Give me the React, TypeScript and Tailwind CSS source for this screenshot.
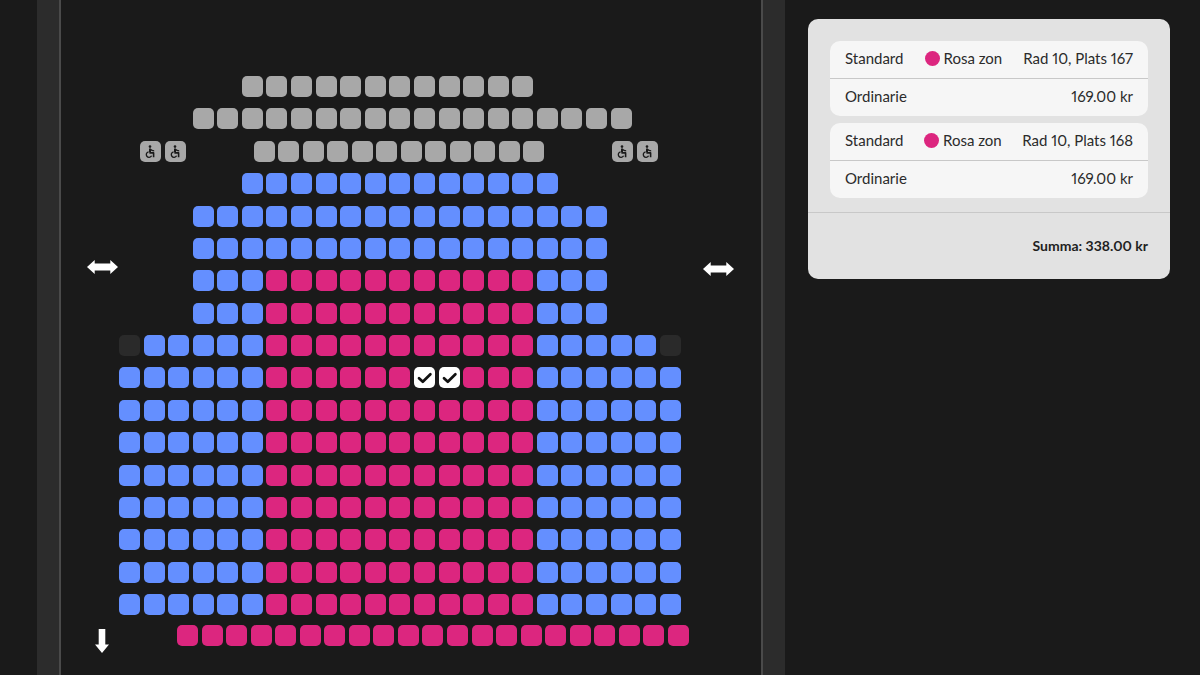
import { useState } from 'react';

type SeatKind = 'b' | 'p' | 'g' | 'x' | 'w';

// b = blue zone, p = pink zone, g = taken, x = blocked, w = wheelchair, . = empty space
const rows = [
  '.....gggggggggggg......',
  '...gggggggggggggggggg..',
  'ww|gggggggggggg|ww',
  '.....bbbbbbbbbbbbb.....',
  '...bbbbbbbbbbbbbbbbb...',
  '...bbbbbbbbbbbbbbbbb...',
  '...bbbpppppppppppbbb...',
  '...bbbpppppppppppbbb...',
  'xbbbbbpppppppppppbbbbbx',
  'bbbbbbpppppppppppbbbbbb',
  'bbbbbbpppppppppppbbbbbb',
  'bbbbbbpppppppppppbbbbbb',
  'bbbbbbpppppppppppbbbbbb',
  'bbbbbbpppppppppppbbbbbb',
  'bbbbbbpppppppppppbbbbbb',
  'bbbbbbpppppppppppbbbbbb',
  'bbbbbbpppppppppppbbbbbb',
];
const lastRow = 'ppppppppppppppppppppp';

const seatColors: Record<SeatKind, string> = {
  b: 'bg-[#648fff]',
  p: 'bg-[#dc267f]',
  g: 'bg-[#a8a8a8]',
  w: 'bg-[#a8a8a8]',
  x: 'bg-[#2a2a2a]',
};

const tickets = [
  { id: 167, type: 'Standard', zone: 'Rosa zon', place: 'Rad 10, Plats 167', price: '169.00 kr' },
  { id: 168, type: 'Standard', zone: 'Rosa zon', place: 'Rad 10, Plats 168', price: '169.00 kr' },
];

function CheckIcon() {
  return (
    <svg viewBox="0 0 21 21" className="size-full" aria-hidden="true">
      <path
        d="M5 11.2 8.8 14.8 16.4 7.2"
        fill="none"
        stroke="#111"
        strokeWidth="2.7"
        strokeLinecap="round"
        strokeLinejoin="round"
      />
    </svg>
  );
}

function WheelchairIcon() {
  return (
    <svg viewBox="0 0 21 21" className="size-full" fill="none" stroke="#1a1a1a" aria-hidden="true">
      <circle cx="10" cy="5.6" r="1.3" fill="#1a1a1a" stroke="none" />
      <path d="M10 7.4v3.8" strokeWidth="2" />
      <path d="M10.3 8.2c.9 1.1 2.2 1.7 3.9 1.7" strokeWidth="1.3" />
      <path d="M9.4 11.9h4.2v4.3" strokeWidth="1.6" strokeLinejoin="round" />
      <path d="M8.6 10.8a2.8 2.8 0 1 0 3 4" strokeWidth="1.3" />
    </svg>
  );
}

function DoubleArrow() {
  return (
    <svg width="31" height="14" viewBox="0 0 31 14" fill="#fff" aria-hidden="true">
      <path d="M0 7 7.7 0v3.6h15.6V0L31 7l-7.7 7v-3.6H7.7V14z" />
    </svg>
  );
}

function DownArrow() {
  return (
    <svg width="14" height="24" viewBox="0 0 14 24" fill="#fff" aria-hidden="true">
      <path d="M3.7 0h6.6v15.5H14L7 24 0 15.5h3.7z" />
    </svg>
  );
}

interface SeatProps {
  kind: SeatKind;
  label: string;
  selected: boolean;
  onToggle: () => void;
}

function Seat({ kind, label, selected, onToggle }: SeatProps) {
  return (
    <button
      type="button"
      aria-label={label}
      aria-pressed={selected}
      disabled={kind === 'g' || kind === 'x'}
      onClick={onToggle}
      className={`size-[21px] shrink-0 rounded-[5px] ${selected ? 'bg-white' : seatColors[kind]}`}
    >
      {selected && <CheckIcon />}
      {!selected && kind === 'w' && <WheelchairIcon />}
    </button>
  );
}

function App() {
  const [selected, setSelected] = useState<string[]>(['10-12', '10-13']);

  const toggle = (id: string) => {
    setSelected(selected.includes(id) ? selected.filter((s) => s !== id) : [...selected, id]);
  };

  const renderSeats = (seats: string, row: number, offset = 0) =>
    seats.split('').map((kind, i) => {
      const id = `${row}-${i + offset}`;
      if (kind === '.') return <span key={id} className="size-[21px] shrink-0" />;
      return (
        <Seat
          key={id}
          kind={kind as SeatKind}
          label={`Rad ${row}, Plats ${i + offset + 1}`}
          selected={selected.includes(id)}
          onToggle={() => toggle(id)}
        />
      );
    });

  return (
    <div className="flex min-h-screen bg-[#1a1a1a] pl-[37px] font-[Lato,sans-serif] text-[#2b2b2b]">
      <main className="flex min-w-0 flex-1">
        <div className="w-6 shrink-0 border-r-2 border-[#4a4a4a] bg-[#2c2c2c]"></div>

        <div className="flex w-[58px] shrink-0 flex-col items-center pt-[260px] pl-6">
          <DoubleArrow />
          <div className="mt-[355px]">
            <DownArrow />
          </div>
        </div>

        <div className="min-w-0 flex-1 pt-[76px] pb-7">
          <div className="mr-2 flex h-[539px] flex-col justify-between">
            {rows.map((row, i) =>
              row.includes('|') ? (
                <div key={i} className="flex justify-between pr-[23px] pl-[21px]">
                  {row.split('|').map((group, g) => (
                    <div key={g} className={`flex justify-between ${g === 1 ? 'w-[291px]' : 'w-[46px]'}`}>
                      {renderSeats(group, i + 1, g * 20)}
                    </div>
                  ))}
                </div>
              ) : (
                <div key={i} className="flex justify-between">
                  {renderSeats(row, i + 1)}
                </div>
              ),
            )}
          </div>
          <div className="mt-[10px] ml-[58px] flex justify-between">{renderSeats(lastRow, 18)}</div>
        </div>

        <div className="w-[72px] shrink-0 pt-[262px] pl-[14px]">
          <DoubleArrow />
        </div>

        <div className="w-6 shrink-0 border-l-2 border-[#4a4a4a] bg-[#2c2c2c]"></div>
      </main>

      <aside className="w-[415px] shrink-0 pt-[19px] pr-[30px] pl-[23px] text-[15px] proportional-nums">
        <section className="rounded-[10px] bg-[#e2e2e2]">
          <ul className="flex flex-col gap-[7px] px-[22px] pt-[22px] pb-[14px]">
            {tickets.map((ticket) => (
              <li key={ticket.id} className="rounded-[10px] bg-[#f6f6f6]">
                <div className="flex h-[38px] items-center justify-between border-b border-[#c8c8c8] px-[15px] pb-0.5">
                  <span>{ticket.type}</span>
                  <span className="flex items-center gap-1">
                    <span className="size-[15px] rounded-full bg-[#dc267f]"></span>
                    {ticket.zone}
                  </span>
                  <span>{ticket.place}</span>
                </div>
                <div className="flex h-[37px] items-center justify-between px-[15px] pb-0.5">
                  <span>Ordinarie</span>
                  <span>{ticket.price}</span>
                </div>
              </li>
            ))}
          </ul>
          <div className="flex h-[67px] items-center justify-end border-t border-[#c8c8c8] px-[22px] text-sm font-bold text-[#1f1f1f]">
            Summa: 338.00 kr
          </div>
        </section>
      </aside>
    </div>
  );
}

export default App;
